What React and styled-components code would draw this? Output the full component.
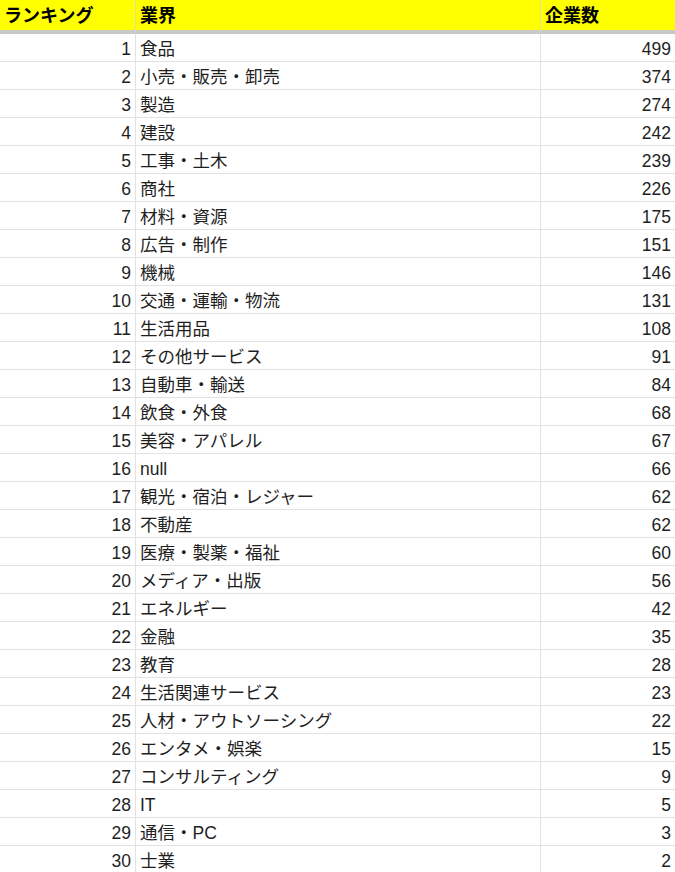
import React from 'react';
import styled, { createGlobalStyle } from 'styled-components';

const GlobalStyle = createGlobalStyle`
    body {
        margin: 0;
        background: #ffffff;
        font-family: "Liberation Sans", "Noto Sans CJK JP", sans-serif;
        color: #1f1f1f;
    }
`

const Sheet = styled.div`
    width: 675px;
    display: grid;
    grid-template-columns: 136px 405px 134px;
`

const HeadCell = styled.div`
    box-sizing: border-box;
    background: #ffff00;
    border-right: ${p => p.last ? 'none' : '1px solid #e0e0a0'};
    border-bottom: 4px solid #c8c8c8;
    height: 34px;
    padding: 3px 0 0 4px;
    font-size: 18px;
    font-weight: 700;
    color: #000;
    line-height: 27px;
    white-space: nowrap;
    overflow: hidden;
`

const Cell = styled.div`
    height: 28px;
    box-sizing: border-box;
    border-right: ${p => p.last ? 'none' : '1px solid #e2e2e2'};
    border-bottom: 1px solid #e2e2e2;
    font-size: 17.5px;
    line-height: 26px;
    padding: 2px 4px 0;
    text-align: ${p => p.num ? 'right' : 'left'};
    white-space: nowrap;
    overflow: hidden;
`

const rows = [
    ['食品', 499],
    ['小売・販売・卸売', 374],
    ['製造', 274],
    ['建設', 242],
    ['工事・土木', 239],
    ['商社', 226],
    ['材料・資源', 175],
    ['広告・制作', 151],
    ['機械', 146],
    ['交通・運輸・物流', 131],
    ['生活用品', 108],
    ['その他サービス', 91],
    ['自動車・輸送', 84],
    ['飲食・外食', 68],
    ['美容・アパレル', 67],
    ['null', 66],
    ['観光・宿泊・レジャー', 62],
    ['不動産', 62],
    ['医療・製薬・福祉', 60],
    ['メディア・出版', 56],
    ['エネルギー', 42],
    ['金融', 35],
    ['教育', 28],
    ['生活関連サービス', 23],
    ['人材・アウトソーシング', 22],
    ['エンタメ・娯楽', 15],
    ['コンサルティング', 9],
    ['IT', 5],
    ['通信・PC', 3],
    ['士業', 2],
];

const App = () => {
    return (
        <>
            <GlobalStyle />
            <Sheet>
                <HeadCell>ランキング</HeadCell>
                <HeadCell>業界</HeadCell>
                <HeadCell last>企業数</HeadCell>
                {rows.map(([name, count], i) => (
                    <React.Fragment key={name + i}>
                        <Cell num>{i + 1}</Cell>
                        <Cell>{name}</Cell>
                        <Cell num last>{count}</Cell>
                    </React.Fragment>
                ))}
            </Sheet>
        </>
    );
}

export default App;
